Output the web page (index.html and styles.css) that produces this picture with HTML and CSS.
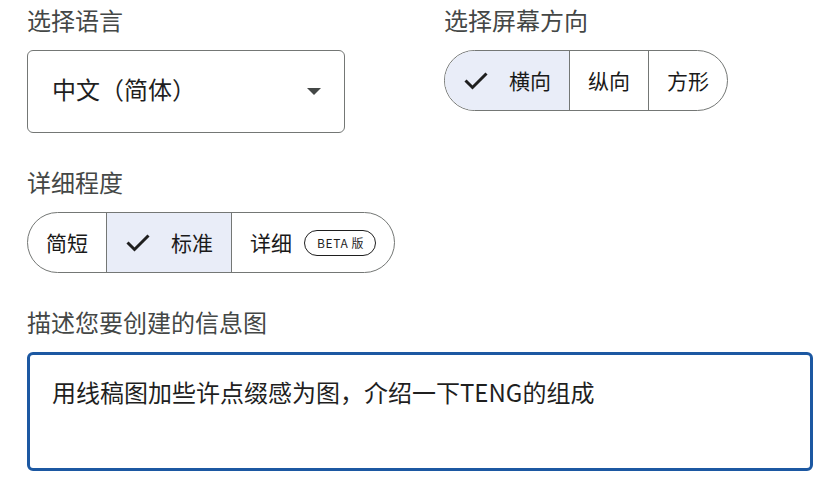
FILE: index.html
```html
<!DOCTYPE html>
<html lang="zh-CN">
<head>
<meta charset="utf-8">
<title>信息图设置</title>
<link rel="stylesheet" href="styles.css">
</head>
<body>
<div class="form">
  <div class="row row-split">
    <div class="field">
      <div class="label">选择语言</div>
      <div class="select">
        <span class="select-value">中文（简体）</span>
        <svg class="caret" width="14" height="7" viewBox="0 0 14 7"><path d="M0 0h14L7 7z"/></svg>
      </div>
    </div>
    <div class="field">
      <div class="label">选择屏幕方向</div>
      <div class="seg">
        <div class="seg-item selected">
          <svg class="check" width="26" height="20" viewBox="0 0 26 20"><polyline points="2.5,9.5 9.5,16.5 23.5,2.5"/></svg>
          <span class="seg-text">横向</span>
        </div>
        <div class="seg-item"><span class="seg-text">纵向</span></div>
        <div class="seg-item"><span class="seg-text">方形</span></div>
      </div>
    </div>
  </div>

  <div class="row">
    <div class="field">
      <div class="label">详细程度</div>
      <div class="seg">
        <div class="seg-item"><span class="seg-text">简短</span></div>
        <div class="seg-item selected">
          <svg class="check" width="26" height="20" viewBox="0 0 26 20"><polyline points="2.5,9.5 9.5,16.5 23.5,2.5"/></svg>
          <span class="seg-text">标准</span>
        </div>
        <div class="seg-item"><span class="seg-text">详细</span><span class="badge">BETA 版</span></div>
      </div>
    </div>
  </div>

  <div class="row">
    <div class="field">
      <div class="label">描述您要创建的信息图</div>
      <textarea class="prompt">用线稿图加些许点缀感为图，介绍一下TENG的组成</textarea>
    </div>
  </div>
</div>
</body>
</html>
```

FILE: styles.css
```css
* {
  box-sizing: border-box;
}

html, body {
  margin: 0;
  background: #ffffff;
}

body {
  font-family: "Noto Sans CJK SC", "Noto Sans", sans-serif;
  color: #1f1f1f;
}

.form {
  padding: 4px 21px 0 27px;
}

.row {
  margin-bottom: 33px;
}

.row-split {
  display: grid;
  grid-template-columns: 417px 1fr;
}

.field {
  display: flex;
  flex-direction: column;
  align-items: flex-start;
}

.label {
  font-size: 24px;
  line-height: 32px;
  color: #444746;
  margin-bottom: 14px;
}

.select {
  width: 318px;
  height: 83px;
  border: 1px solid #747775;
  border-radius: 6px;
  display: flex;
  align-items: center;
  justify-content: space-between;
  padding: 0 23px 0 24px;
}

.select-value {
  font-size: 24px;
  line-height: 32px;
  color: #1f1f1f;
  margin-bottom: 5px;
}

.caret path {
  fill: #444746;
}

.seg {
  display: inline-flex;
  height: 61px;
  border: 1px solid #747775;
  border-radius: 31px;
  overflow: hidden;
}

.seg-item {
  display: flex;
  align-items: center;
  gap: 20px;
  padding: 0 18px;
  color: #1f1f1f;
}

.seg-text {
  font-size: 21px;
  font-weight: 400;
  line-height: 28px;
  color: #1a1a1a;
  margin-bottom: 2px;
}

.seg-item + .seg-item {
  border-left: 1px solid #747775;
}

.seg-item.selected {
  background: #e9edf8;
}

.check polyline {
  fill: none;
  stroke: #1f1f1f;
  stroke-width: 3;
}

.badge {
  display: inline-flex;
  align-items: center;
  height: 26px;
  padding: 0 11px 0 12px;
  margin-left: -8px;
  border: 1px solid #1f1f1f;
  border-radius: 13px;
  font-size: 12px;
  font-weight: 400;
  letter-spacing: 0.6px;
  line-height: 16px;
  color: #1f1f1f;
}

.prompt {
  width: 786px;
  height: 119px;
  border: 3px solid #1c58a2;
  border-radius: 6px;
  padding: 21px 22px;
  font-family: "Noto Sans CJK SC", "Noto Sans", sans-serif;
  font-size: 24px;
  line-height: 32px;
  color: #1f1f1f;
  resize: none;
  outline: none;
  background: #ffffff;
}
```
